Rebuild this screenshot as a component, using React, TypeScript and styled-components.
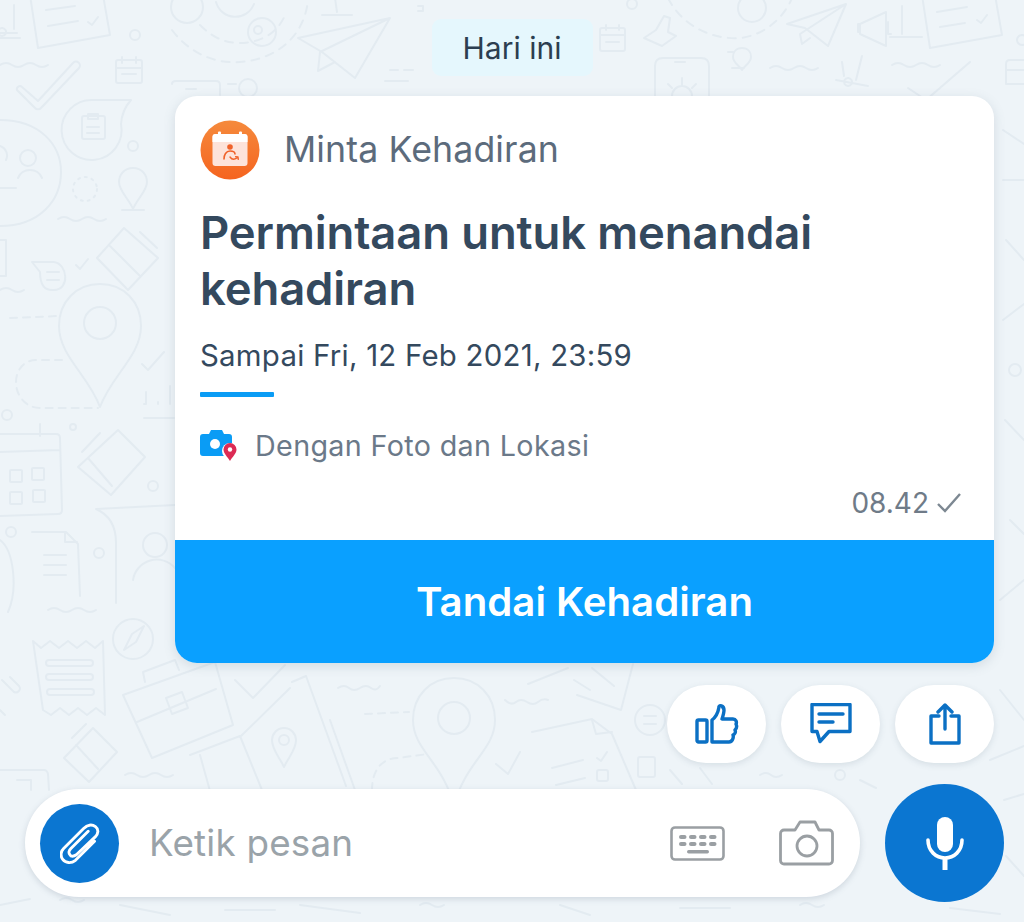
import React from 'react';
import styled, { createGlobalStyle } from 'styled-components';

const GlobalStyle = createGlobalStyle`
  html, body {
    margin: 0;
    padding: 0;
    background: #eef4f8;
  }
  body {
    font-family: Inter, "Noto Sans", "Liberation Sans", sans-serif;
  }
`;

const Screen = styled.div`
  position: relative;
  width: 1024px;
  height: 922px;
  overflow: hidden;
  background: #eef4f8;
  display: flex;
  flex-direction: column;
  box-sizing: border-box;
  padding-top: 19px;
`;

const Wallpaper = styled.svg`
  position: absolute;
  inset: 0;
  width: 1024px;
  height: 922px;
  fill: none;
  stroke: #e3ebf1;
  stroke-width: 2;
  stroke-linecap: round;
  stroke-linejoin: round;
`;

const DateChip = styled.div`
  position: relative;
  align-self: center;
  width: 161px;
  height: 57px;
  display: flex;
  align-items: center;
  justify-content: center;
  background: #e5f7fd;
  border-radius: 9px;
  color: #2c3e50;
  font-size: 30px;
`;

const Thread = styled.div`
  position: relative;
  display: flex;
  flex-direction: column;
  align-items: flex-end;
  padding: 0 30px 0 175px;
`;

const Card = styled.div`
  width: 819px;
  height: 567px;
  margin-top: 20px;
  background: #fff;
  border-radius: 22px;
  overflow: hidden;
  display: flex;
  flex-direction: column;
  box-shadow: 0 3px 12px rgba(90, 110, 130, 0.18);
`;

const CardBody = styled.div`
  flex: 1;
  display: flex;
  flex-direction: column;
  padding: 24px 25px 0;
  box-sizing: border-box;
`;

const CardHeader = styled.div`
  display: flex;
  align-items: center;
  gap: 24px;
  height: 60px;
`;

const HeaderLabel = styled.span`
  padding-bottom: 3px;
  font-size: 35.7px;
  color: #5c6b7c;
  letter-spacing: 0.1px;
`;

const Title = styled.h1`
  margin: 25px 0 0;
  font-size: 45.4px;
  line-height: 56px;
  font-weight: 600;
  color: #34495e;
  letter-spacing: -0.1px;
`;

const Deadline = styled.div`
  margin-top: 20px;
  font-size: 29.4px;
  line-height: 38px;
  color: #34495e;
  letter-spacing: 0.25px;
`;

const Divider = styled.div`
  width: 74px;
  height: 5px;
  margin-top: 17px;
  background: #0a9cf5;
  border-radius: 1px;
`;

const Requirement = styled.div`
  display: flex;
  align-items: center;
  gap: 17px;
  height: 38px;
  margin-top: 29px;
  font-size: 28.7px;
  color: #6b7989;
  letter-spacing: 0.35px;
`;

const Meta = styled.div`
  display: flex;
  align-items: center;
  justify-content: flex-end;
  gap: 7px;
  height: 36px;
  margin-top: 21px;
  margin-right: 7px;
  font-size: 28px;
  color: #6f7b88;
`;

const PrimaryButton = styled.button`
  width: 100%;
  height: 123px;
  flex: none;
  border: 0;
  background: #0aa0ff;
  color: #fff;
  font-family: inherit;
  font-size: 40.2px;
  font-weight: 600;
`;

const Reactions = styled.div`
  display: flex;
  gap: 15px;
  margin-top: 22px;
`;

const ReactionButton = styled.button`
  width: 99px;
  height: 78px;
  padding: 0;
  border: 0;
  border-radius: 39px;
  background: #fff;
  display: flex;
  align-items: center;
  justify-content: center;
  box-shadow: 0 2px 6px rgba(90, 110, 130, 0.16);
`;

const ComposerRow = styled.div`
  position: relative;
  display: flex;
  align-items: center;
  gap: 25px;
  padding: 21px 20px 0 25px;
`;

const Composer = styled.div`
  width: 835px;
  height: 108px;
  flex: none;
  box-sizing: border-box;
  padding: 0 26px 0 15px;
  background: #fff;
  border-radius: 54px;
  display: flex;
  align-items: center;
  box-shadow: 0 2px 6px rgba(90, 110, 130, 0.22);
`;

const AttachButton = styled.div`
  width: 79px;
  height: 79px;
  flex: none;
  border-radius: 50%;
  background: #0b76d1;
  display: flex;
  align-items: center;
  justify-content: center;
`;

const Placeholder = styled.span`
  flex: 1;
  margin-left: 30px;
  padding-bottom: 2px;
  font-size: 36.8px;
  color: #9aa3a9;
  letter-spacing: 0.2px;
`;

const ComposerIcons = styled.div`
  display: flex;
  align-items: center;
  gap: 54px;
`;

const MicButton = styled.div`
  width: 119px;
  height: 118px;
  flex: none;
  border-radius: 50%;
  background: #0b76d1;
  display: flex;
  align-items: center;
  justify-content: center;
`;

function Doodles() {
  return (
    <Wallpaper viewBox="0 0 1024 922">
      {/* top left corner */}
      <path d="M0 33h17M14 5v24M2 28a4 4 0 1 0 .1 0M0 38h20" />
      <path d="M30 -5l8 53 72-13-7-40M46 10l29-4M48 26l30-5M88 22l4 3 6-8" />
      <circle cx="135" cy="35" r="5" />
      <rect x="116" y="60" width="26" height="23" rx="2" />
      <path d="M116 68h26M122 57v6M136 57v6M122 74h14" />
      <path d="M0 65q6-4 12 0t12 0 12 0 12 0" />
      <path d="M17 90a3 3 0 0 1 5-3l16 14 35-38a3 3 0 0 1 6 5L41 108a4 4 0 0 1-6 0z" />
      <path d="M131 100H93a30 30 0 1 0 28 24q1-14 10-24z" />
      <rect x="82" y="116" width="23" height="23" rx="2" />
      <path d="M88 114h10v5H88zM87 127h12M87 133h12" />
      <circle cx="133" cy="146" r="5" />
      <path d="M0 120c40 0 61 25 61 52 0 28-21 54-61 54" />
      <circle cx="28" cy="158" r="8" />
      <path d="M18 178a13 13 0 0 1 24 0M0 146a10 10 0 0 1 6 14M0 188h16" />
      <circle cx="85" cy="189" r="12" strokeDasharray="2 5" />
      <path d="M133 168c9 0 14 7 14 14 0 9-10 17-14 27-4-10-14-18-14-27 0-7 5-14 14-14zM122 210h22" />
      <path d="M58 219q6-4 12 0t12 0 12 0 12 0" />
      <path d="M124 228l34 30-30 32-31-32zM140 232l17 16M110 246l30 30" />
      <path d="M32 262h22c14 2 16 28 0 28-10 1-14-6-14-18zM47 272h12M47 280h12M76 265l4 4 8-10" />
      <path d="M0 240h6v36H0M0 290q6-4 12 0t12 0" />

      {/* left column, pin and calendar */}
      <path d="M100 284c24 0 41 18 41 42 0 30-30 50-41 81-11-31-41-51-41-81 0-24 17-42 41-42z" />
      <circle cx="100" cy="323" r="16" />
      <path d="M10 318l48-2M62 360H36c-12 0-20 10-20 22 0 14 10 26 24 26h58" strokeDasharray="7 6" />
      <path d="M142 364l6 6 16-18" />
      <path d="M146 404h-2M146 392v12M158 402v2M170 386v18M144 418h30" />
      <circle cx="7" cy="415" r="5" />
      <circle cx="73" cy="427" r="3" />
      <path d="M0 434h56q4 0 4 4l2 72q0 4-4 4l-58 2M0 452l60-2M40 424v12" />
      <rect x="10" y="470" width="12" height="12" rx="1" />
      <rect x="32" y="468" width="12" height="12" rx="1" />
      <rect x="10" y="492" width="12" height="12" rx="1" />
      <rect x="33" y="490" width="12" height="12" rx="1" />
      <path d="M118 430l27 27-34 38-33-28zM82 452l18-19M88 458l24 28" />
      <circle cx="153" cy="486" r="5" />
      <circle cx="11" cy="532" r="5" />
      <circle cx="99" cy="553" r="5" />
      <path d="M32 532h34l12 12 2 52M65 532v10h12M44 555h22M44 565h22M44 575h22M0 540c14 10 18 50 8 72" />
      <path d="M96 509l79-4M96 509c14 6 20 18 20 34v60" />
      <circle cx="155" cy="545" r="12" />
      <path d="M133 580a24 24 0 0 1 42-12" />

      {/* lower left */}
      <path d="M48 610q6-4 12 0t12 0 12 0 12 0" />
      <circle cx="133" cy="639" r="20" />
      <path d="M124 650l8-16 12-8-8 16z" />
      <path d="M33 641l8 7 9-7 9 7 9-7 9 7 9-7 9 7 8-7 2 74-9-7-9 7-9-7-9 7-9-7-9 7-8-5z" />
      <rect x="46" y="660" width="47" height="6" rx="3" />
      <rect x="46" y="674" width="47" height="6" rx="3" />
      <rect x="47" y="689" width="47" height="6" rx="3" />
      <path d="M2 680l12 12a4 4 0 0 0 5-6l-9-9M0 710l5 5" />
      <path d="M123 695l92-33 18 63-81 33zM145 682l-2-10 32-12 4 10M137 722l79-33M166 698l16-6 6 16-16 6z" />
      <path d="M235 680l18 18 32-33" />
      <path d="M240 737l50-49M190 755l50-19 22 54M292 682l14-6 40 110M200 755l10 36" />
      <path d="M284 728c7 0 12 6 12 12 0 10-7 16-12 27-5-11-12-17-12-27 0-6 5-12 12-12z" />
      <circle cx="284" cy="740" r="5" />
      <path d="M93 728l24 24-28 30-25-24zM72 738l14-14M76 745l22 24" />
      <path d="M125 775q6-4 12 0t12 0 12 0 12 0" />
      <path d="M0 770h44q3 0 4 4l1 16M17 780h14v10" />

      {/* bottom middle */}
      <path d="M338 688q6-4 11 0t11 0 11 0 9-2" />
      <path d="M365 714l44-2M372 790c0-20 10-32 26-32l30-4" strokeDasharray="7 6" />
      <path d="M454 678c24 0 41 18 41 42 0 30-30 42-41 86-11-44-41-56-41-86 0-24 17-42 41-42z" />
      <circle cx="454" cy="718" r="16" />
      <path d="M330 720l25 70" />
      <path d="M505 700q6 6 11 2t11 0 11 0 10-2" />
      <path d="M496 764l12 10 12-22" />
      <path d="M532 732l60-13 20 15 24 56M592 720l4 14 16-2M552 768l31-8M556 785l29-7M597 758l4 3 6-9" />
      <rect x="597" y="770" width="11" height="11" rx="2" />
      <rect x="638" y="757" width="17" height="20" rx="2" />
      <path d="M577 695l44 15 12-46M528 684l40-16M574 680l16 10M592 668l22 18" />
      <circle cx="650" cy="720" r="15" />
      <path d="M644 716h12M644 724h12" />

      {/* top middle */}
      <circle cx="187" cy="7" r="16" />
      <path d="M216 2a20 20 0 0 0 38 2M335 -2l2 14M322 15h30" />
      <path d="M172 30c18 24 44 34 68 32 32-2 64-22 68-62M200 25c12 12 24 18 40 18 20 0 38-10 45-28" strokeDasharray="8 7" />
      <circle cx="262" cy="32" r="14" />
      <circle cx="258" cy="30" r="4" />
      <path d="M298 38l92-20-35 60-33-26zM390 18l-70 34-2 19 17-9" />
      <path d="M390 70h8M404 70h9M385 81h23M418 6h5v5h-5" />
      <path d="M172 84q0-3 4-3h40q4 0 4 4v10M186 89h10" />
      <circle cx="248" cy="88" r="9" />
      <path d="M228 84h8" />

      {/* top right */}
      <rect x="600" y="28" width="25" height="23" rx="2" />
      <path d="M600 35h25M606 25v5M619 25v5M606 42h13" />
      <circle cx="632" cy="4" r="5" />
      <path d="M644 38l12-8 8-14 6 2-2 14 8 4-14 10zM608 -2h4" />
      <path d="M668 -2c14 28 44 42 72 40 20-2 42-16 52-40M692 -2" strokeDasharray="8 7" />
      <circle cx="752" cy="8" r="14" />
      <path d="M787 24l59-20-18 42-23-18zM846 4l-46 30 2 10 8-6" />
      <path d="M860 24l26-12v34l-26-12zM860 24h-2v8h2M888 22v12h3M902 6v28M890 37h32" />
      <path d="M922 -5l8 53 72-13-7-40M937 12l30-5M940 27l25-4M977 20l4 3 6-8M1022 35a5 5 0 1 0 .1 0" />
      <path d="M655 96V66q0-8 8-8h38q8 0 8 8v30M675 62h10M682 78v8M668 84l4 4M696 84l-4 4M672 96a10 10 0 0 1 20 0" />
      <path d="M742 48c6 0 9 4 9 9 0 6-6 8-9 13-3-5-9-7-9-13 0-5 3-9 9-9zM728 52h5M732 68h12" />
      <path d="M770 68q6-4 12 0t12 0 12 0 12 0" />
      <path d="M836 80l32 6M842 62l2 14M862 56l-6 24M848 78a4 4 0 1 0 .1 0" />
      <path d="M892 65q6-4 12 0t12 0 12 0 12 0" />
      <path d="M908 88l18 12 44-38" />
      <path d="M1024 60h-14q-4 0-4 4v20h18M1006 70h18" />

      {/* right edge */}
      <path d="M1003 130l21 14M1003 180h21M1006 240l18 20M1003 320l21-16M1005 420l19 20M1010 520l14 14M1000 600l24-20M1000 690l24 30" />
      <circle cx="1015" cy="370" r="6" />

      {/* bottom right and lower strip */}
      <path d="M670 770l12 14M700 768l12 16M760 775q6-4 11 0t11 0M860 780l16 8M990 760l34-14M1004 800l20-6M1006 856l18 20" />
      <circle cx="840" cy="775" r="5" />
      <path d="M0 905l30-6M60 900q6-4 12 0t12 0M120 905l50 10M225 910h50M300 905l60 8M420 905q6-4 12 0t12 0M560 905l30 10M680 908h50M800 905q6-4 12 0t12 0M950 908l50 6" />
    </Wallpaper>
  );
}

function RequestIcon() {
  return (
    <svg width="60" height="60" viewBox="0 0 60 60">
      <defs>
        <linearGradient id="requestBg" x1="0" y1="0" x2="0" y2="1">
          <stop offset="0" stopColor="#f58a3c" />
          <stop offset="1" stopColor="#f5641f" />
        </linearGradient>
      </defs>
      <circle cx="30" cy="30" r="29.5" fill="url(#requestBg)" />
      <rect x="12.5" y="14" width="35" height="32" rx="3" fill="#fde3da" />
      <path d="M12.5 17a3 3 0 0 1 3-3h29a3 3 0 0 1 3 3v5h-35z" fill="#fff" />
      <rect x="18" y="11.5" width="3" height="5" rx="1" fill="#fff" />
      <rect x="39" y="11.5" width="3" height="5" rx="1" fill="#fff" />
      <circle cx="30" cy="27" r="2.8" fill="#f0622a" />
      <path d="M24 39c0-4 2-8 6-8s5 2 5 3" fill="none" stroke="#f0622a" strokeWidth="1.6" strokeLinecap="round" />
      <path d="M30 37c2 3 5 3 8 0M38 37l-2.4-.3M38 37l.3 2.4" fill="none" stroke="#f0622a" strokeWidth="1.4" strokeLinecap="round" />
    </svg>
  );
}

function PhotoLocationIcon() {
  return (
    <svg width="38" height="34" viewBox="0 0 38 34">
      <path
        d="M3 6h6l2-4h11l2 4h5a3 3 0 0 1 3 3v16a3 3 0 0 1-3 3H3a3 3 0 0 1-3-3V9a3 3 0 0 1 3-3z"
        fill="#0a9cf5"
      />
      <circle cx="15" cy="16" r="5" fill="#fff" />
      <circle cx="30" cy="23" r="8" fill="#fff" />
      <path
        d="M30 15a6.5 6.5 0 0 1 6.5 6.5c0 4-4.2 7.500-6.500 11.500-2.300-4-6.500-7.500-6.500-11.500A6.500 6.500 0 0 1 30 15z"
        fill="#dc2b54"
      />
      <circle cx="30" cy="21.500" r="2.200" fill="#fff" />
    </svg>
  );
}

function CheckIcon() {
  return (
    <svg width="26" height="22" viewBox="0 0 26 22" fill="none" stroke="#7d8892" strokeWidth="2.4">
      <path d="M2 12l7 7L24 2" />
    </svg>
  );
}

function LikeIcon() {
  return (
    <svg width="44" height="42" viewBox="0 0 44 42" fill="none" stroke="#0b70c4" strokeWidth="3.4" strokeLinejoin="round" strokeLinecap="round">
      <rect x="2" y="17" width="10" height="22" rx="1.500" />
      <path d="M17 39V17c4-3 6-7 7-13 0-2 5-2 5 3 0 3-1 6-2 9h11c3 0 4 3 3 5 1 2 1 4-1 6 1 2 0 4-2 5 1 3-1 7-4 7z" />
    </svg>
  );
}

function CommentIcon() {
  return (
    <svg width="42" height="42" viewBox="0 0 42 42" fill="none" stroke="#0b70c4" strokeWidth="3.4" strokeLinejoin="round" strokeLinecap="round">
      <path d="M2 2h38v27H19l-9 10-3-10H2z" transform="translate(0 -.500)" />
      <path d="M9 11h24M9 19h14" />
    </svg>
  );
}

function ShareIcon() {
  return (
    <svg width="32" height="42" viewBox="0 0 32 42" fill="none" stroke="#0b70c4" strokeWidth="3.4" strokeLinejoin="round" strokeLinecap="round">
      <path d="M10 13H2v27h28V13h-8" />
      <path d="M16 26V2M9 9l7-7 7 7" />
    </svg>
  );
}

function PaperclipIcon() {
  return (
    <svg width="40" height="44" viewBox="0 0 44 46" fill="none" stroke="#fff" strokeWidth="3.200" strokeLinecap="round" strokeLinejoin="round">
      <path d="M38 21L17 42c-5 4-11 3-14-1-3-4-2-9 1-12L26 7c4-4 9-5 13-2 4 3 3 8 0 11L18 36c-3 2-6 2-7 0-2-2-1-5 1-7l19-19" />
    </svg>
  );
}

function KeyboardIcon() {
  return (
    <svg width="55" height="35" viewBox="0 0 55 35">
      <rect x="1.500" y="1.500" width="52" height="32" rx="3.500" fill="none" stroke="#9a9fa3" strokeWidth="2.600" />
      {[0, 1].map((row) =>
        [0, 1, 2, 3].map((col) => (
          <rect key={`${row}-${col}`} x={9 + col * 10} y={9 + row * 7} width="7.500" height="4" rx="2" fill="#9a9fa3" />
        ))
      )}
      <rect x="17" y="24" width="22" height="3.500" rx="1.700" fill="#9a9fa3" />
    </svg>
  );
}

function CameraIcon() {
  return (
    <svg width="55" height="46" viewBox="0 0 55 46" fill="none" stroke="#9a9fa3" strokeWidth="2.800" strokeLinejoin="round">
      <path d="M5 10h11l5-8h15l4 8h10a3.500 3.500 0 0 1 3.500 3.500v27a3.500 3.500 0 0 1-3.500 3.500H5a3.500 3.500 0 0 1-3.500-3.500v-27A3.500 3.500 0 0 1 5 10z" />
      <circle cx="28" cy="26" r="10" />
    </svg>
  );
}

function MicIcon() {
  return (
    <svg width="38" height="53" viewBox="0 0 38 53" fill="none">
      <rect x="11" y="0" width="16" height="35" rx="8" fill="#fff" />
      <path d="M2 23c0 11 8 18 17 18s17-7 17-18" stroke="#fff" strokeWidth="3.600" strokeLinecap="round" />
      <path d="M19 41v12" stroke="#fff" strokeWidth="5" />
    </svg>
  );
}

export default function App() {
  return (
    <Screen>
      <GlobalStyle />
      <Doodles />
      <DateChip>Hari ini</DateChip>
      <Thread>
        <Card>
          <CardBody>
            <CardHeader>
              <RequestIcon />
              <HeaderLabel>Minta Kehadiran</HeaderLabel>
            </CardHeader>
            <Title>Permintaan untuk menandai kehadiran</Title>
            <Deadline>Sampai Fri, 12 Feb 2021, 23:59</Deadline>
            <Divider />
            <Requirement>
              <PhotoLocationIcon />
              Dengan Foto dan Lokasi
            </Requirement>
            <Meta>
              08.42 <CheckIcon />
            </Meta>
          </CardBody>
          <PrimaryButton>Tandai Kehadiran</PrimaryButton>
        </Card>
        <Reactions>
          <ReactionButton aria-label="Suka"><LikeIcon /></ReactionButton>
          <ReactionButton aria-label="Komentar"><CommentIcon /></ReactionButton>
          <ReactionButton aria-label="Bagikan"><ShareIcon /></ReactionButton>
        </Reactions>
      </Thread>
      <ComposerRow>
        <Composer>
          <AttachButton><PaperclipIcon /></AttachButton>
          <Placeholder>Ketik pesan</Placeholder>
          <ComposerIcons>
            <KeyboardIcon />
            <CameraIcon />
          </ComposerIcons>
        </Composer>
        <MicButton><MicIcon /></MicButton>
      </ComposerRow>
    </Screen>
  );
}
